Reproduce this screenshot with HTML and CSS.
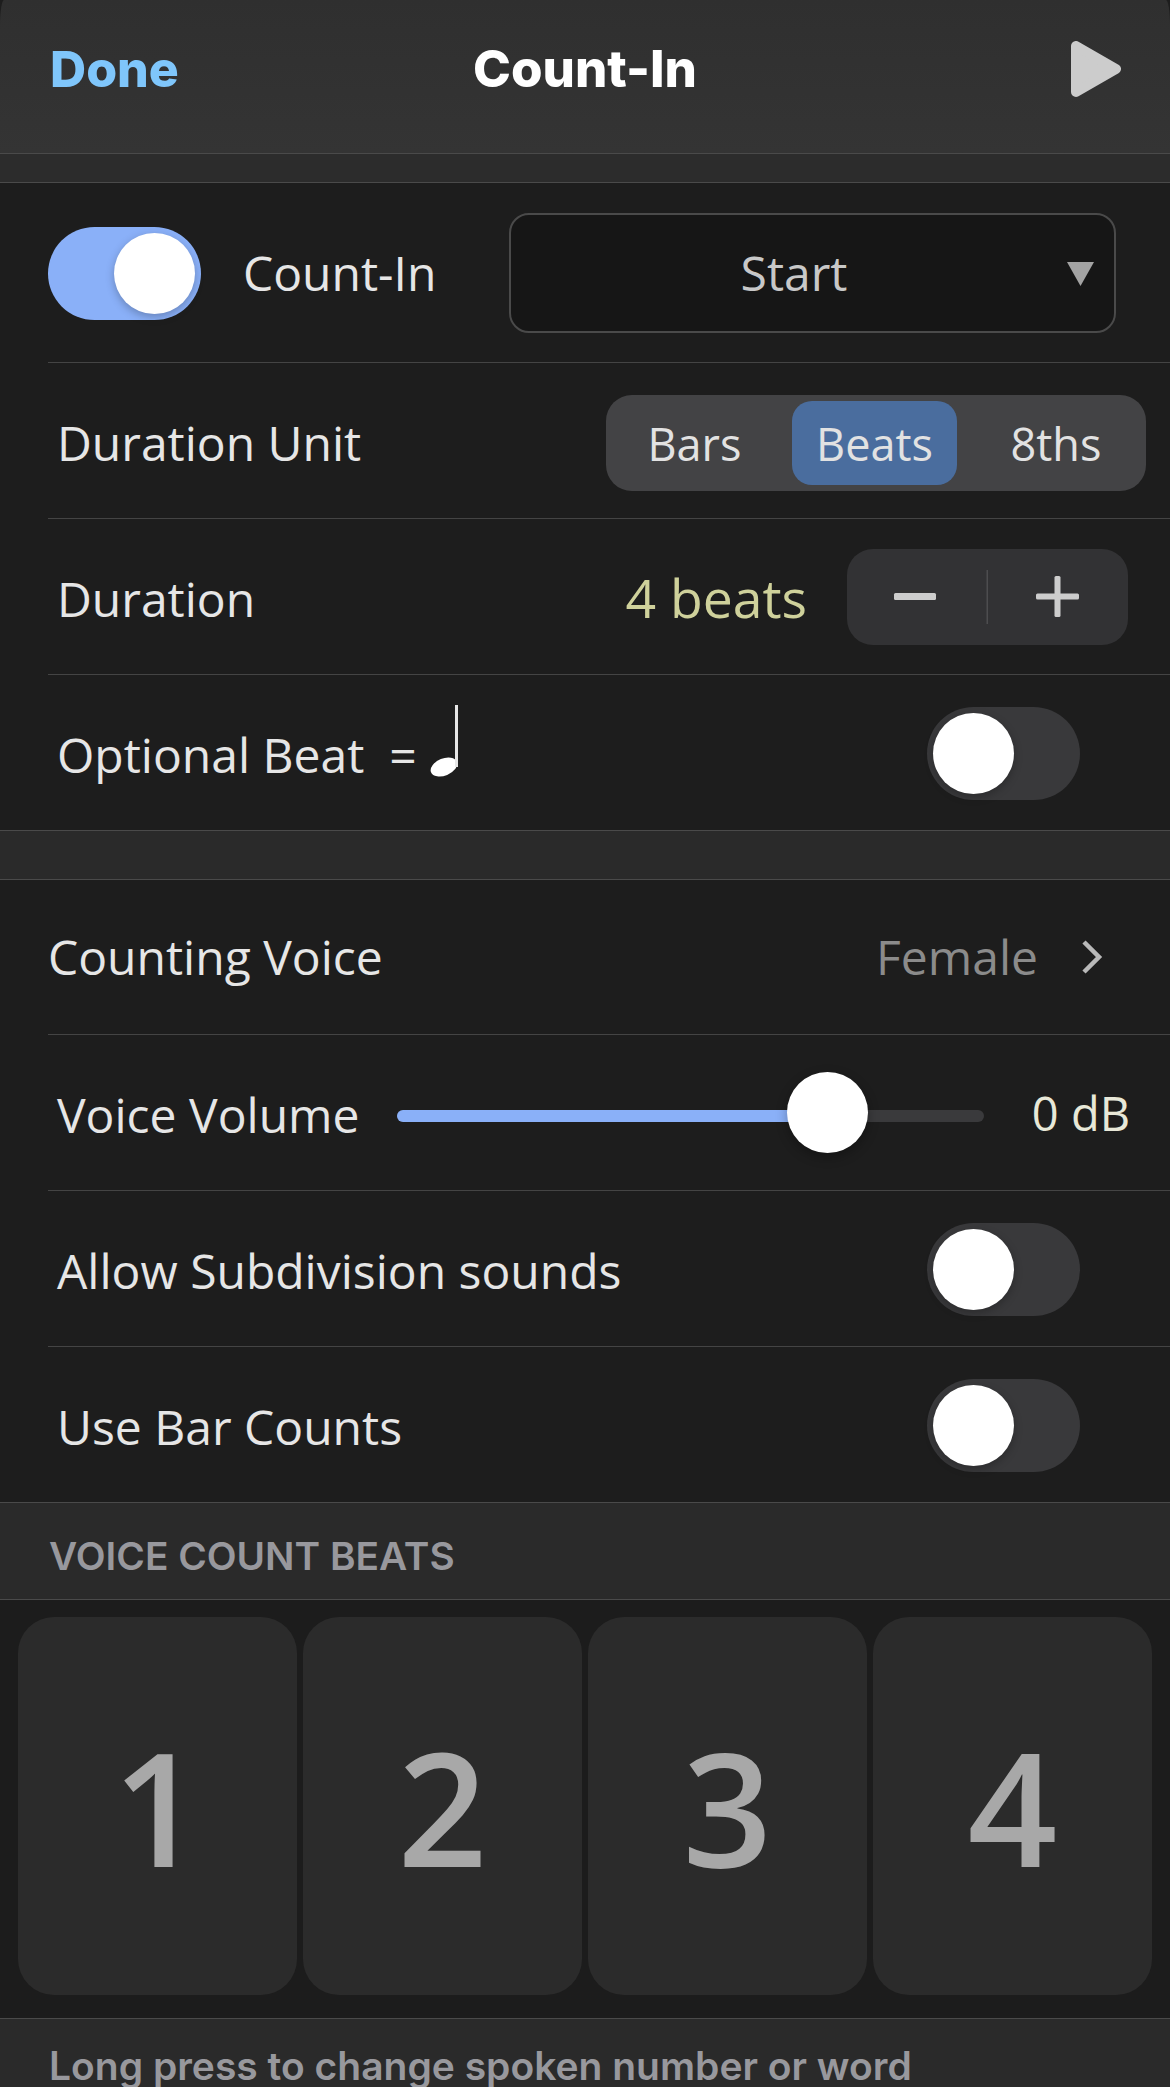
FILE: index.html
```html
<!DOCTYPE html>
<html lang="en">
<head>
<meta charset="utf-8">
<title>Count-In</title>
<link rel="stylesheet" href="styles.css">
</head>
<body>
<div class="page">
  <header class="nav">
    <span class="nav-done">Done</span>
    <span class="nav-title">Count-In</span>
    <svg class="nav-play" width="50" height="56" viewBox="0 0 50 56"><polygon points="5,5 5,51 45,28" fill="#cccccc" stroke="#cccccc" stroke-width="10" stroke-linejoin="round"/></svg>
  </header>
  <div class="spacer spacer-top"></div>

  <section class="group">
    <div class="row row-first">
      <div class="toggle toggle-on"><span class="knob"></span></div>
      <span class="label label-count">Count-In</span>
      <div class="dropdown">
        <span class="dropdown-text">Start</span>
        <svg class="dropdown-arrow" width="27" height="24" viewBox="0 0 27 24"><path d="M0 0H27L13.5 24Z" fill="#a3a3a3"/></svg>
      </div>
    </div>
    <div class="row">
      <span class="label">Duration Unit</span>
      <div class="segments">
        <span class="segment">Bars</span>
        <span class="segment segment-active">Beats</span>
        <span class="segment">8ths</span>
      </div>
    </div>
    <div class="row">
      <span class="label">Duration</span>
      <span class="beats">4 beats</span>
      <div class="stepper">
        <svg width="281" height="96" viewBox="0 0 281 96">
          <rect x="47" y="44" width="42" height="7" rx="1.5" fill="#cdcdcd"/>
          <rect x="139.5" y="21" width="1.5" height="54" fill="#4d4d4f"/>
          <rect x="189" y="44.5" width="43" height="6" rx="1.5" fill="#cdcdcd"/>
          <rect x="207.5" y="27" width="6" height="41" rx="1.5" fill="#cdcdcd"/>
        </svg>
      </div>
    </div>
    <div class="row row-last">
      <span class="label">Optional Beat &nbsp;=</span>
      <svg class="note" width="30" height="74" viewBox="0 0 30 74"><ellipse cx="14" cy="62" rx="14" ry="8.5" transform="rotate(-22 14 62)" fill="#fff"/><rect x="25" y="0" width="3" height="62" fill="#e6e6e6"/></svg>
      <div class="toggle toggle-off toggle-end"><span class="knob"></span></div>
    </div>
  </section>

  <div class="spacer spacer-mid"></div>

  <section class="group">
    <div class="row row-voice">
      <span class="label">Counting Voice</span>
      <span class="value">Female</span>
      <svg class="chevron" width="22" height="36" viewBox="0 0 22 36"><path d="M3 3 L18 18 L3 33" fill="none" stroke="#b9b9b9" stroke-width="4.5"/></svg>
    </div>
    <div class="row">
      <span class="label">Voice Volume</span>
      <div class="slider"><span class="slider-fill"></span><span class="slider-knob"></span></div>
      <span class="db">0 dB</span>
    </div>
    <div class="row">
      <span class="label">Allow Subdivision sounds</span>
      <div class="toggle toggle-off toggle-end"><span class="knob"></span></div>
    </div>
    <div class="row row-last">
      <span class="label">Use Bar Counts</span>
      <div class="toggle toggle-off toggle-end"><span class="knob"></span></div>
    </div>
  </section>

  <div class="section-head">VOICE COUNT BEATS</div>

  <section class="tiles">
    <div class="tile">1</div>
    <div class="tile">2</div>
    <div class="tile">3</div>
    <div class="tile">4</div>
  </section>

  <footer class="foot">Long press to change spoken number or word</footer>
</div>
</body>
</html>
```

FILE: styles.css
```css
* { box-sizing: border-box; }
html, body { margin: 0; padding: 0; background: #000; }
body { width: 1170px; height: 2087px; overflow: hidden; }
.page { width: 1170px; height: 2087px; background: #1d1d1d; font-family: "Open Sans", sans-serif; overflow: hidden; }

.nav { height: 154px; display: flex; align-items: flex-start; position: relative; background: linear-gradient(#2f2f2f, #343434); border-bottom: 1px solid #4a4a4a; border-radius: 4px 4px 0 0 / 26px 26px 0 0; font-family: Inter, sans-serif; font-weight: 800; font-size: 50px; }
.nav-done { color: #7fc6fb; margin: 39px 0 0 50px; line-height: 60px; }
.nav-title { color: #fff; position: absolute; left: 0; right: 0; top: 39px; text-align: center; line-height: 60px; font-size: 51px; }
.nav-play { position: absolute; top: 41px; left: 1071px; }

.spacer { background: #2a2a2a; border-bottom: 1px solid #4a4a4a; }
.spacer-top { height: 29px; background: #2c2c2c; }
.spacer-mid { height: 49px; }

.group { background: #1d1d1d; border-bottom: 1px solid #4a4a4a; }
.row { margin-left: 48px; padding-left: 9px; height: 156px; display: flex; align-items: center; border-bottom: 1px solid #444; position: relative; }
.row-first { height: 180px; padding-left: 0; }
.row-last { border-bottom: 0; height: 155px; }
.row-voice { padding-left: 0; height: 155px; }
.label { color: #e6e6e6; font-size: 48px; font-weight: 400; white-space: nowrap; margin-top: 4px; }
.row-first .label { margin-top: 0; }
.row-voice .label { margin-top: -2px; }
.label-count { margin-left: 42px; }

.toggle { width: 153px; height: 93px; border-radius: 47px; position: relative; flex: none; margin-top: 2px; }
.toggle-on { background: #8ab0f8; }
.toggle-off { background: #39393b; }
.toggle-end { margin-left: auto; margin-right: 90px; }
.knob { position: absolute; top: 6px; width: 81px; height: 81px; border-radius: 50%; background: #fff; box-shadow: 0 3px 8px rgba(0,0,0,.25); }
.toggle-on .knob { right: 6px; }
.toggle-off .knob { left: 6px; }

.dropdown { position: absolute; left: 461px; top: 30px; width: 607px; height: 120px; background: #161616; border: 2px solid #4a4a4a; border-radius: 20px; }
.dropdown-text { position: absolute; left: 0; width: 566px; text-align: center; top: 26px; line-height: 64px; color: #c8c8c8; font-size: 48px; }
.dropdown-arrow { position: absolute; left: 556px; top: 47px; }

.segments { position: absolute; left: 558px; top: 32px; width: 540px; height: 96px; display: grid; grid-template-columns: repeat(3, 1fr); background: #434345; border-radius: 26px; }
.segment { display: flex; align-items: center; justify-content: center; color: #e2e2e2; font-size: 45px; margin: 6px 7px; border-radius: 20px; }
.segment:first-child { margin-right: 10px; }
.segment-active { background: #4a6d9e; margin: 6px 9px 6px 6px; }

.beats { color: #cfd19b; font-size: 53.5px; margin-left: auto; margin-right: 40px; margin-top: 1px; }
.stepper { width: 281px; height: 96px; background: #323234; border-radius: 26px; margin-right: 42px; flex: none; }
.stepper svg { display: block; }

.note { margin-left: 13px; margin-top: -22px; flex: none; }

.value { color: #8b8b8b; font-size: 48px; margin-left: auto; margin-right: 43px; margin-top: -2px; }
.chevron { margin-right: 67px; flex: none; }

.slider { position: absolute; left: 349px; top: 75px; width: 587px; height: 12px; background: #3a3a3c; border-radius: 6px; }
.slider-fill { position: absolute; left: 0; top: 0; height: 12px; width: 400px; background: #8ab0f8; border-radius: 6px 0 0 6px; }
.slider-knob { position: absolute; left: 390px; top: -38px; width: 81px; height: 81px; background: #fff; border-radius: 50%; box-shadow: 0 4px 12px rgba(0,0,0,.3); }
.db { margin-left: auto; margin-right: 40px; color: #e8e8d8; font-size: 47px; }

.section-head { height: 97px; padding: 8px 0 0 49px; display: flex; align-items: center; background: #2a2a2a; border-bottom: 1px solid #4a4a4a; color: #98989d; font-family: Inter, sans-serif; font-weight: 600; font-size: 38.8px; white-space: nowrap; }

.tiles { height: 419px; padding: 17px 18px 23px; display: grid; grid-template-columns: repeat(4, 1fr); gap: 6px; background: #1c1c1c; border-bottom: 1px solid #4a4a4a; }
.tile { background: #2b2b2b; border-radius: 36px; display: flex; align-items: center; justify-content: center; color: #a8a8a8; font-size: 157px; font-weight: 600; }

.foot { height: 68px; background: #2a2a2a; padding: 26px 0 0 49px; color: #98989d; font-family: Inter, sans-serif; font-weight: 600; font-size: 39px; line-height: 42px; white-space: nowrap; }
```
